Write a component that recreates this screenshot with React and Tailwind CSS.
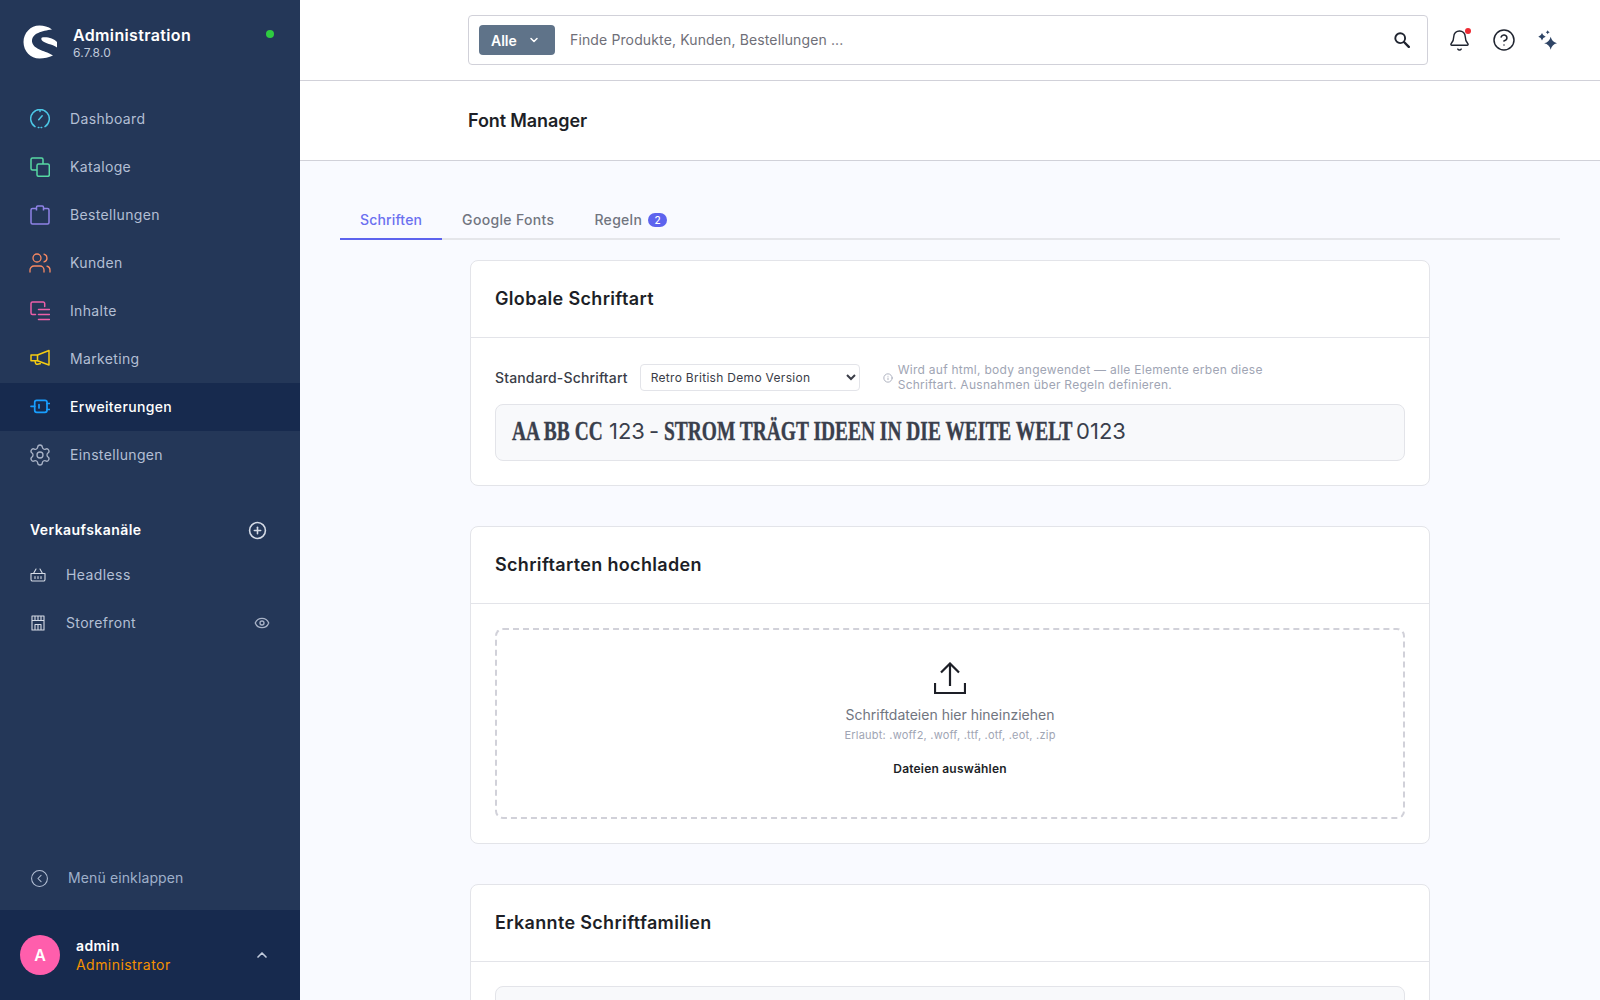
import { Settings, Users, CirclePlus, Eye, ChevronUp, ChevronDown, Bell, CircleHelp, Info, CircleChevronLeft } from 'lucide-react';

function Gauge() {
  return (
    <svg viewBox="0 0 20 20" className="w-5 h-5" fill="none" stroke="#4cc7e6" strokeWidth="1.5" strokeLinecap="round">
      <path d="M5 17.600A9.300 9.300 0 1 1 15 17.600" />
      <path d="M8.300 18.500h.6M11.100 18.500h.6" />
      <path d="M10 1v1.500" />
      <path d="M8.700 10.800 12.200 6.800" />
    </svg>
  );
}

function Layers() {
  return (
    <svg viewBox="0 0 20 20" className="w-5 h-5" fill="none" stroke="#57d9a3" strokeWidth="1.5">
      <path d="M7 13H2.500A1.500 1.500 0 0 1 1 11.500V2.500A1.500 1.500 0 0 1 2.500 1H11.500A1.500 1.500 0 0 1 13 2.500V7" />
      <rect x="7" y="7" width="12.300" height="12.300" rx="1.500" />
    </svg>
  );
}

function Bag() {
  return (
    <svg viewBox="0 0 20 20" className="w-5 h-5" fill="none" stroke="#8f83e6" strokeWidth="1.5" strokeLinejoin="round">
      <path d="M6.500 3.500H2.500a1.500 1.500 0 0 0-1.500 1.500v12.500a1.500 1.500 0 0 0 1.500 1.500h15a1.500 1.500 0 0 0 1.500-1.500V5a1.500 1.500 0 0 0-1.500-1.500h-4" />
      <path d="M6.500 5.500V2.200a1.200 1.200 0 0 1 1.200-1.200h4.600a1.200 1.200 0 0 1 1.200 1.200V5.500" />
    </svg>
  );
}

function ContentIcon() {
  return (
    <svg viewBox="0 0 20 20" className="w-5 h-5" fill="none" stroke="#ec5fa8" strokeWidth="1.5" strokeLinecap="round">
      <path d="M14.700 5.500V2.500A1.500 1.500 0 0 0 13.200 1H2.500A1.500 1.500 0 0 0 1 2.500V12a1.500 1.500 0 0 0 1.500 1.500H5.500" />
      <path d="M8.500 8.500h11M8.500 13.500h11M8.500 18.500h11" />
    </svg>
  );
}

function Megaphone() {
  return (
    <svg viewBox="0 0 20 20" className="w-5 h-5" fill="none" stroke="#f5cc12" strokeWidth="1.5" strokeLinejoin="round">
      <path d="M1 6h6.500v5.700H1z" />
      <path d="M7.500 6 19 1.500v14.500l-11.500-4.300" />
      <path d="M5 12l.6 2.300a1.300 1.300 0 0 0 1.700.9l3.600-.8" />
    </svg>
  );
}

function Plug() {
  return (
    <svg viewBox="0 0 20 20" className="w-5 h-5" fill="none" stroke="#189eff" strokeWidth="1.7" strokeLinecap="round" strokeLinejoin="round">
      <rect x="4.700" y="3.300" width="12.300" height="12" rx="2" />
      <path d="M1 9.300h3.700M17 6.500h2.500M17 12.500h2.500M9 7.500v3.500" />
    </svg>
  );
}

function Basket() {
  return (
    <svg viewBox="0 0 16 16" className="w-4 h-4" fill="none" stroke="#d5dbe6" strokeWidth="1.1" strokeLinecap="round" strokeLinejoin="round">
      <path d="M1 6.500h14v6a1.500 1.500 0 0 1-1.500 1.500h-11A1.500 1.500 0 0 1 1 12.500z" />
      <path d="M3.500 6.500 6 2M12.500 6.500 10 2M5 9.500v2M8 9.500v2M11 9.500v2" />
    </svg>
  );
}

function Shopfront() {
  return (
    <svg viewBox="0 0 16 16" className="w-4 h-4" fill="none" stroke="#d5dbe6" strokeWidth="1.1" strokeLinejoin="round">
      <path d="M2 1h12v14H2zM2 5.500h12M5 1.500v4M8 1.500v4M11 1.500v4M5 15v-5.500h6V15M8 9.500V15" />
    </svg>
  );
}

function Stars() {
  return (
    <svg viewBox="0 0 20 20" className="w-5 h-5" fill="#2f4566">
      <path d="M13.700 6.800Q14.900 12.100 20.200 13.300Q14.900 14.500 13.700 19.800Q12.500 14.500 7.200 13.300Q12.500 12.100 13.700 6.800Z" />
      <path d="M5 3Q5.800 5.900 8.700 6.700Q5.800 7.500 5 10.400Q4.200 7.500 1.300 6.700Q4.200 5.900 5 3Z" />
      <path d="M10.700 .3Q11.100 1.900 12.700 2.300Q11.100 2.700 10.700 4.300Q10.300 2.700 8.700 2.300Q10.300 1.900 10.700 .3Z" />
    </svg>
  );
}

function SearchIcon() {
  return (
    <svg viewBox="0 0 16 16" className="w-4 h-4 ml-auto" fill="none" stroke="#1f2430" strokeLinecap="round">
      <circle cx="6.200" cy="6.200" r="4.900" strokeWidth="1.900" />
      <path d="M10 10l4.800 4.800" strokeWidth="2.400" />
    </svg>
  );
}

function UploadIcon() {
  return (
    <svg viewBox="0 0 32 32" className="w-8 h-8" fill="none" stroke="#1d1f27" strokeWidth="2.200">
      <path d="M16 1.500V24M7 10.500l9-9 9 9" />
      <path d="M1 21v10h30V21" />
    </svg>
  );
}

function Logo() {
  return (
    <svg viewBox="0 0 34 34" className="w-[34px] h-[34px]" fill="#fff">
      <path d="M29 4.500C25 1.500 21 .5 16.500 .5C7.500 .5 .5 8 .5 17C.5 26 7.500 33.500 16.500 33.500C21 33.500 26 32.500 30 30.500C24 26 10 25 9 16.500C9 8 19 6 29 4.500Z" />
      <path d="M19 12.500C24 11.500 31 13.500 34 17L34 22.500C29 19 22 18.500 19.500 16C18 15 18 13 19 12.500Z" />
    </svg>
  );
}

const mainNav = [
  { label: 'Dashboard', icon: <Gauge /> },
  { label: 'Kataloge', icon: <Layers /> },
  { label: 'Bestellungen', icon: <Bag /> },
  { label: 'Kunden', icon: <Users size={24} strokeWidth={1.3} color="#f88962" className="shrink-0" /> },
  { label: 'Inhalte', icon: <ContentIcon /> },
  { label: 'Marketing', icon: <Megaphone /> },
  { label: 'Erweiterungen', icon: <Plug />, active: true },
  { label: 'Einstellungen', icon: <Settings size={24} strokeWidth={1.3} color="#a9b3c7" className="shrink-0" /> },
];

function Sidebar() {
  return (
    <aside className="w-[300px] shrink-0 h-screen bg-[#243758] flex flex-col">
      <div className="h-[95px] shrink-0 flex items-start pt-[25px] pl-[23px] pr-[26px]">
        <Logo />
        <div className="ml-[16px]">
          <div className="text-[16px] leading-[20px] font-semibold tracking-[0.35px] text-white">Administration</div>
          <div className="text-[12px] leading-[15px] tracking-[0.2px] text-[#c0cadb]">6.7.8.0</div>
        </div>
        <span className="ml-auto mt-[5px] w-2 h-2 rounded-full bg-[#2ecc40]" />
      </div>

      <nav>
        {mainNav.map((item) => (
          <div key={item.label} className={`h-12 flex items-center pl-[30px] ${item.active ? 'bg-[#172a4e]' : ''}`}>
            <span className="w-5 h-5 mr-[20px] flex items-center justify-center">{item.icon}</span>
            <span className={`text-sm tracking-[0.35px] ${item.active ? 'font-medium text-white' : 'text-[#b3bfd4]'}`}>{item.label}</span>
          </div>
        ))}
      </nav>

      <div className="mt-[39px] pl-[30px] pr-[33px] flex items-center justify-between h-6">
        <span className="text-sm font-semibold tracking-[0.43px] text-white">Verkaufskanäle</span>
        <CirclePlus size={19} strokeWidth={2} color="#d5dbe6" />
      </div>

      <div className="mt-[9px]">
        <div className="h-12 flex items-center pl-[30px]">
          <Basket />
          <span className="ml-[20px] text-sm tracking-[0.4px] text-[#b3bfd4]">Headless</span>
        </div>
        <div className="h-12 flex items-center pl-[30px] pr-[30px]">
          <Shopfront />
          <span className="ml-[20px] text-sm tracking-[0.35px] text-[#b3bfd4]">Storefront</span>
          <Eye size={16} strokeWidth={2} color="#a9b3c7" className="ml-auto" />
        </div>
      </div>

      <div className="mt-auto h-[62px] flex items-center pl-[30px] pb-[2px]">
        <CircleChevronLeft size={19} strokeWidth={1.3} color="#b3bfd4" />
        <span className="ml-[19px] text-sm tracking-[0.12px] text-[#9fb0ca]">Menü einklappen</span>
      </div>

      <div className="h-[90px] bg-[#172a4e] flex items-center pl-[20px] pr-[30px]">
        <div className="w-10 h-10 rounded-full bg-[#ff5eac] flex items-center justify-center text-white font-semibold text-base">A</div>
        <div className="ml-4">
          <div className="text-sm leading-[19px] font-semibold tracking-[0.4px] text-white">admin</div>
          <div className="text-sm leading-[19px] tracking-[0.45px] text-[#f59100]">Administrator</div>
        </div>
        <ChevronUp size={16} strokeWidth={2.5} color="#c0cadb" className="ml-auto" />
      </div>
    </aside>
  );
}

function TopBar() {
  return (
    <div className="h-[81px] shrink-0 bg-white border-b border-[#d1d1d9] flex items-center pl-[168px]">
      <div className="w-[960px] h-[50px] border border-[#d1d1d9] rounded-[4px] flex items-center pl-[10px] pr-[17px] -mt-[1px]">
        <div className="w-[76px] h-[30px] rounded-[4px] bg-[#5f7389] text-white text-sm font-semibold flex items-center pl-[12px] pt-[2px]">
          Alle
          <ChevronDown size={12} strokeWidth={3} className="ml-[11px] -mt-[1px]" />
        </div>
        <span className="ml-[15px] text-sm tracking-[0.13px] text-[#6f6f78]">Finde Produkte, Kunden, Bestellungen ...</span>
        <SearchIcon />
      </div>
      <div className="relative ml-[20px]">
        <Bell size={23} strokeWidth={1.5} color="#1f2430" />
        <span className="absolute -top-[1px] right-0 w-[6px] h-[6px] rounded-full bg-[#ee2a33]" />
      </div>
      <CircleHelp size={24} strokeWidth={1.5} color="#1f2430" className="ml-[21px]" />
      <span className="ml-[21px]"><Stars /></span>
    </div>
  );
}

function Tabs() {
  return (
    <div className="mx-[40px] mt-[40px] h-[39px] border-b-2 border-[#e5e6ea] flex text-sm font-medium text-[#71757f]">
      <div className="h-[39px] px-[20px] border-b-2 border-[#5d63ee] text-[#6b70f0] pt-[9px] tracking-[0.15px]">Schriften</div>
      <div className="h-[39px] px-[20px] pt-[9px] tracking-[0.33px]">Google Fonts</div>
      <div className="h-[39px] px-[20px] flex items-start pt-[9px] tracking-[0.3px]">
        Regeln
        <span className="ml-[6px] mt-[3px] w-[19px] h-[14px] rounded-full bg-[#5d63ee] text-white text-[10px] leading-[14px] text-center">2</span>
      </div>
    </div>
  );
}

function Card({ title, children }) {
  return (
    <section className="w-[960px] bg-white border border-[#e3e4e9] rounded-[8px]">
      <h2 className="h-[77px] px-[24px] pb-[2px] flex items-center border-b border-[#e3e4e9] text-[18px] font-semibold tracking-[0.33px] text-[#1d1f27]">{title}</h2>
      {children}
    </section>
  );
}

export default function App() {
  return (
    <div className="flex h-screen overflow-hidden bg-[#f9faff] font-['Inter',sans-serif]">
      <Sidebar />
      <main className="flex-1 min-w-0 flex flex-col">
        <TopBar />
        <div className="h-[80px] shrink-0 bg-white border-b border-[#d1d1d9] flex items-center pl-[168px] text-[18px] font-semibold tracking-[-0.1px] text-[#1d1f27]">
          Font Manager
        </div>
        <Tabs />
        <div className="mt-[20px] ml-[170px] flex flex-col gap-[40px]">
          <Card title="Globale Schriftart">
            <div className="px-[24px] pt-[25px] pb-[24px]">
              <div className="flex items-center h-[30px]">
                <span className="text-sm font-medium tracking-[0.15px] text-[#3a3d47]">Standard-Schriftart</span>
                <select className="ml-[12px] -mt-[1px] w-[220px] h-[27px] bg-white border border-[#e3e4e9] rounded-[4px] pl-[6px] text-[12px] tracking-[0.3px] text-[#3a3d47]" defaultValue="retro">
                  <option value="retro">Retro British Demo Version</option>
                </select>
                <Info size={10} color="#a0a5b4" className="ml-[23px] -mt-[1px]" />
                <p className="ml-[5px] -mt-[2px] w-[400px] text-[12px] leading-[15px] tracking-[0.27px] text-[#a0a5b4]">
                  Wird auf html, body angewendet — alle Elemente erben diese Schriftart. Ausnahmen über Regeln definieren.
                </p>
              </div>
              <div className="mt-[11px] h-[57px] px-[16px] pb-[2px] flex items-center bg-[#f8f9fb] border border-[#e3e4e9] rounded-[8px] text-[22px] text-[#3a3f4c]">
                <span className="w-[92px]">
                  <b className="inline-block origin-left scale-x-[0.72] whitespace-nowrap font-['Liberation_Serif',serif] text-[27px] [-webkit-text-stroke:0.4px]">AA BB CC</b>
                </span>
                <span className="ml-[5px]">123</span>
                <span className="ml-[4px]">-</span>
                <span className="ml-[5px] w-[408px]">
                  <b className="inline-block origin-left scale-x-[0.72] whitespace-nowrap font-['Liberation_Serif',serif] text-[27px] [-webkit-text-stroke:0.4px]">STROM TRÄGT IDEEN IN DIE WEITE WELT</b>
                </span>
                <span className="ml-[4px]">0123</span>
              </div>
            </div>
          </Card>

          <Card title="Schriftarten hochladen">
            <div className="p-[24px]">
              <div className="h-[191px] border-2 border-dashed border-[#d1d1d9] rounded-[8px] flex flex-col items-center pt-[32px]">
                <UploadIcon />
                <div className="mt-[11px] text-sm text-[#71757f]">Schriftdateien hier hineinziehen</div>
                <div className="mt-[2px] text-[11px] tracking-[0.22px] text-[#a0a5b4]">Erlaubt: .woff2, .woff, .ttf, .otf, .eot, .zip</div>
                <div className="mt-[16px] text-[12px] font-semibold tracking-[0.2px] text-[#1d1f27]">Dateien auswählen</div>
              </div>
            </div>
          </Card>

          <Card title="Erkannte Schriftfamilien">
            <div className="px-[24px] pt-[24px]">
              <div className="h-[80px] bg-[#f8f9fb] border border-[#e3e4e9] rounded-[8px]" />
            </div>
          </Card>
        </div>
      </main>
    </div>
  );
}
